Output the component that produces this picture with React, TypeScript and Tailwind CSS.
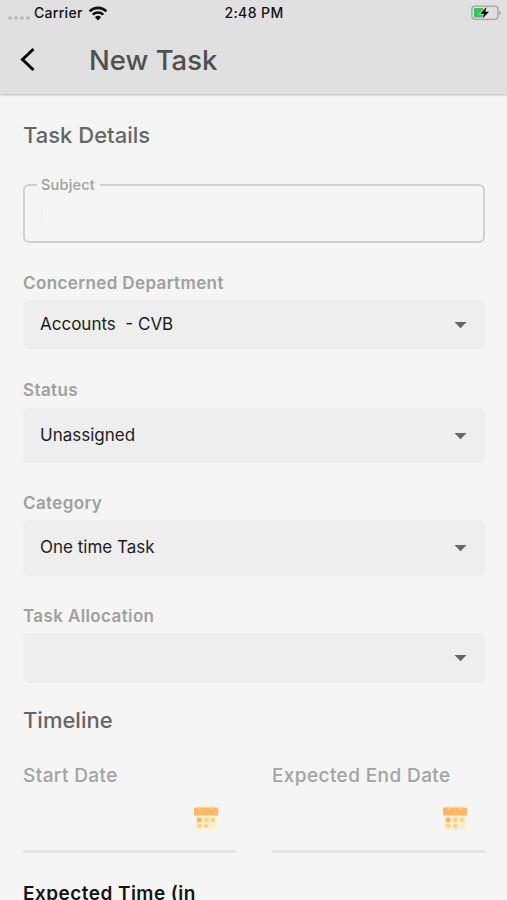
type SelectFieldProps = {
  label: string;
  value: string;
  labelClass: string;
  boxClass: string;
};

function WifiIcon() {
  return (
    <svg width="20" height="15" viewBox="0 0 20 15" fill="none">
      <path d="M1.6 5.4a12 12 0 0 1 16.8 0" stroke="#111" strokeWidth="2.7" />
      <path d="M4.7 8.6a7.6 7.6 0 0 1 10.6 0" stroke="#111" strokeWidth="2.4" />
      <path d="M10 14.4 6.9 11.2a4.5 4.5 0 0 1 6.2 0Z" fill="#111" />
    </svg>
  );
}

function BatteryIcon() {
  return (
    <svg width="31" height="16" viewBox="0 0 31 16" fill="none">
      <rect x="0.9" y="1.1" width="26" height="13.2" rx="3" stroke="#a3a3a3" strokeWidth="1.3" />
      <path d="M28.2 5.4c2 .6 2 4 0 4.6Z" fill="#a3a3a3" />
      <rect x="3" y="3" width="9.5" height="9.4" rx="1" fill="#34c759" />
      <path
        d="M15.6 2 9.2 8.7h3.7L11.6 13.4 18 6.8h-3.7Z"
        fill="#050505"
        stroke="#e0e0e0"
        strokeWidth="1.4"
        paintOrder="stroke"
      />
    </svg>
  );
}

function CalendarIcon() {
  return (
    <svg width="26" height="26" viewBox="0 0 26 26">
      <path d="M2 10h22v14a1 1 0 0 1-1 1H3a1 1 0 0 1-1-1Z" fill="#ffefcd" />
      <path d="M1 4a1.500 1.500 0 0 1 1.500-1.500h21A1.500 1.500 0 0 1 25 4v6.500H1Z" fill="#ffb765" />
      <path d="M7 1v3M18.500 1v3" stroke="#e8dccb" strokeWidth="1.500" strokeLinecap="round" />
      <rect x="4" y="12.500" width="4.500" height="4.500" rx="1.500" fill="#fcae70" />
      <rect x="11" y="12.500" width="4.500" height="4.500" rx="1.500" fill="#fdd384" />
      <rect x="17.500" y="12.500" width="4.500" height="4.500" rx="1.500" fill="#fdd384" />
      <rect x="4" y="18.500" width="4.500" height="4.500" rx="1.500" fill="#fdd384" />
      <rect x="11" y="18.500" width="4.500" height="4.500" rx="1.500" fill="#fdd384" />
    </svg>
  );
}

function SelectField({ label, value, labelClass, boxClass }: SelectFieldProps) {
  return (
    <div>
      <p className={`flex h-5 items-center pt-0.5 text-[17px] font-semibold tracking-[0.38px] text-[#a0a0a0] ${labelClass}`}>
        {label}
      </p>
      <div
        className={`flex items-center justify-between rounded-md bg-[#eeeeee] pr-[18px] pl-[17px] text-[17px] text-[#1c1c1c] ${boxClass}`}
      >
        <span className="whitespace-pre">{value}</span>
        <svg width="13" height="8" viewBox="0 0 13 8">
          <path d="M0.500 1h12L6.500 7.200Z" fill="#666" />
        </svg>
      </div>
    </div>
  );
}

function DateField({ label }: { label: string }) {
  return (
    <div className="h-[90px] border-b-[3px] border-[#e4e4e4]">
      <p className="flex h-6 items-center pt-0.5 text-[19px] font-medium tracking-[0.4px] whitespace-nowrap text-[#a3a3a3]">
        {label}
      </p>
      <div className="mt-[18px] flex justify-end pr-[17px]">
        <CalendarIcon />
      </div>
    </div>
  );
}

export default function App() {
  return (
    <div className="h-[900px] w-full overflow-hidden bg-[#f5f5f5] font-['Inter',sans-serif]">

      {/* Status bar + app bar */}
      <header className="h-[94px] bg-[#e0e0e0] shadow-[0_1px_2px_rgba(0,0,0,0.25)]">
        <div className="grid h-[26px] grid-cols-3 items-center pr-[5px] pl-2 text-[14px] font-medium text-[#111]">
          <div className="flex items-center">
            <div className="mt-[9px] mr-1 flex gap-[2px]">
              {[1, 2, 3, 4].map((i) => (
                <span key={i} className="size-[4px] rounded-full bg-[#bbb]" />
              ))}
            </div>
            <span className="mr-[5px] pb-0.5 tracking-[0.3px]">Carrier</span>
            <WifiIcon />
          </div>
          <span className="pr-0.5 pb-0.5 text-center tracking-[0.4px]">2:48 PM</span>
          <div className="flex justify-end">
            <BatteryIcon />
          </div>
        </div>

        <div className="flex h-[68px] items-center pl-5">
          <svg width="16" height="26" viewBox="0 0 16 26" fill="none">
            <path d="M13.500 2 2.500 12.500l11 10.500" stroke="#050505" strokeWidth="3" />
          </svg>
          <h1 className="ml-[53px] pt-0.5 text-[27.5px] font-medium text-[#505050]">New Task</h1>
        </div>
      </header>

      <main className="pt-[29px] pr-[22px] pl-[23px]">
        <h2 className="flex h-6 items-center text-[22px] font-medium text-[#666]">Task Details</h2>

        {/* Outlined input, the legend cuts the border */}
        <fieldset className="mt-[29px] h-[67px] rounded-md border-2 border-[#d0d0d0] pl-3">
          <legend className="pr-[5px] pl-1 text-[14.5px] leading-[18px] font-medium tracking-[0.2px] text-[#a0a0a0]">
            Subject
          </legend>
          <div className="mt-3 ml-1 h-4 w-px bg-[#efefef]" />
        </fieldset>

        <div className="mt-[30px]">
          <SelectField label="Concerned Department" value="Accounts  - CVB" labelClass="mb-[7px]" boxClass="h-[49px]" />
        </div>
        <div className="mt-[31px]">
          <SelectField label="Status" value="Unassigned" labelClass="mb-2" boxClass="h-[55px]" />
        </div>
        <div className="mt-[30px]">
          <SelectField label="Category" value="One time Task" labelClass="mb-[7px]" boxClass="h-14" />
        </div>
        <div className="mt-[30px]">
          <SelectField label="Task Allocation" value="" labelClass="mb-[7px]" boxClass="h-[50px]" />
        </div>

        <h2 className="mt-[25px] flex h-6 items-center text-[22px] font-medium text-[#666]">Timeline</h2>

        <div className="mt-[31px] grid grid-cols-2 gap-9">
          <DateField label="Start Date" />
          <DateField label="Expected End Date" />
        </div>

        <p className="mt-[29px] flex h-6 items-center text-[19px] font-semibold tracking-[0.45px] text-[#151515]">
          Expected Time (in
        </p>
      </main>
    </div>
  );
}
